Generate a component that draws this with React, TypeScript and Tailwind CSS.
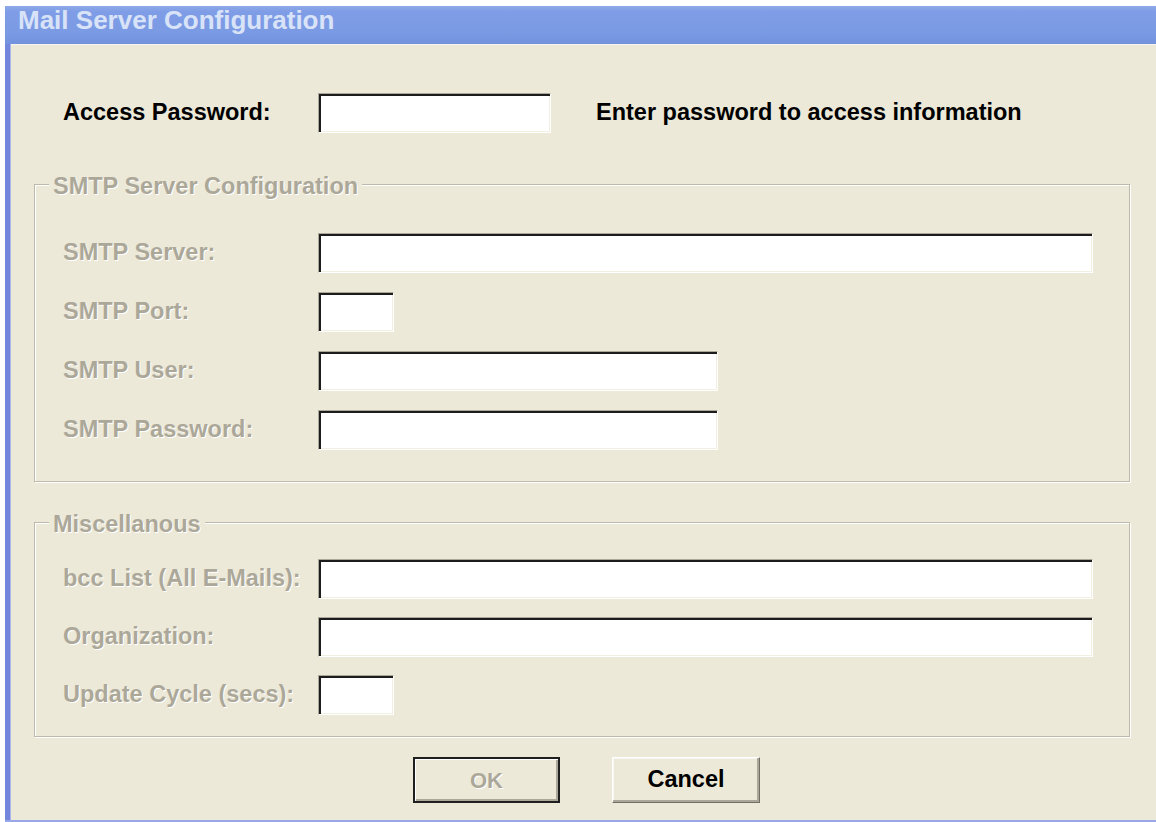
import React from "react";

const font = "font-['Liberation_Sans',Arial,sans-serif]";

function Field({ w, type = "text" }: { w: string; type?: string }) {
  return (
    <input
      type={type}
      className={`${w} h-[40px] bg-white outline-none border border-t-[#aca899] border-l-[#aca899] border-r-white border-b-white shadow-[inset_2px_2px_0_#1c1c1c,inset_-1px_-1px_0_#f1efe2]`}
    />
  );
}

function Row({ label, w, type }: { label: string; w: string; type?: string }) {
  return (
    <div className="flex items-center h-[40px]">
      <span className="w-[255px] text-[23.5px] font-bold text-[#aca899] [text-shadow:1px_1px_0_#ffffff] whitespace-nowrap">
        {label}
      </span>
      <Field w={w} type={type} />
    </div>
  );
}

function Group({
  title,
  className,
  children,
}: {
  title: string;
  className: string;
  children: React.ReactNode;
}) {
  return (
    <div
      className={`relative ml-[23px] w-[1096px] border border-[#bdbaab] shadow-[inset_1px_1px_0_#ffffff,1px_1px_0_#ffffff] ${className}`}
    >
      <span className="absolute -top-[12px] left-[14px] px-[4px] bg-[#ece9d8] leading-[26px] text-[23.5px] font-bold text-[#aca899] [text-shadow:1px_1px_0_#ffffff] whitespace-nowrap">
        {title}
      </span>
      {children}
    </div>
  );
}

export default function App() {
  return (
    <div className={`w-[1156px] h-[822px] bg-white overflow-hidden ${font}`}>
      <div className="ml-[5px] mt-[6px] h-[816px] flex flex-col">
        {/* caption */}
        <div className="h-[38px] shrink-0 bg-[linear-gradient(to_bottom,#8ea9ea_0%,#7f9de6_15%,#7b9ae4_70%,#7392de_100%)] pl-[13px] pt-[2px]">
          <span className="text-[26px] leading-[25px] font-bold text-[#d9e3f8] whitespace-nowrap">
            Mail Server Configuration
          </span>
        </div>

        <div className="flex flex-1">
          {/* left frame edge */}
          <div className="w-[6px] bg-[#7286dc] border-r border-[#a9b6ec]" />

          <div className="flex-1 bg-[#ece9d8] border-t border-[#f6f4ec] flex flex-col">
            {/* password row */}
            <div className="mt-[48px] ml-[52px] flex items-center h-[40px]">
              <span className="w-[255px] text-[23.5px] font-bold text-black whitespace-nowrap">
                Access Password:
              </span>
              <Field w="w-[233px]" type="password" />
              <span className="ml-[45px] text-[23.5px] font-bold text-black whitespace-nowrap">
                Enter password to access information
              </span>
            </div>

            <Group title="SMTP Server Configuration" className="mt-[51px] h-[298px] pt-[48px] pl-[28px]">
              <div className="flex flex-col gap-[19px]">
                <Row label="SMTP Server:" w="w-[775px]" />
                <Row label="SMTP Port:" w="w-[76px]" />
                <Row label="SMTP User:" w="w-[400px]" />
                <Row label="SMTP Password:" w="w-[400px]" type="password" />
              </div>
            </Group>

            <Group title="Miscellanous" className="mt-[40px] h-[215px] pt-[36px] pl-[28px]">
              <div className="flex flex-col gap-[18px]">
                <Row label="bcc List (All E-Mails):" w="w-[775px]" />
                <Row label="Organization:" w="w-[775px]" />
                <Row label="Update Cycle (secs):" w="w-[76px]" />
              </div>
            </Group>

            {/* buttons */}
            <div className="mt-[20px] ml-[402px] flex gap-[52px]">
              <button
                disabled
                className="w-[147px] h-[46px] bg-[#ece9d8] border-2 border-[#1f1f1f] shadow-[inset_1px_1px_0_#ffffff,inset_-2px_-2px_0_#aca899] text-[22px] font-bold text-[#aca899] [text-shadow:1px_1px_0_#ffffff]"
              >
                OK
              </button>
              <button className="w-[148px] h-[46px] bg-[#ece9d8] border border-t-white border-l-white border-r-[#716f64] border-b-[#716f64] shadow-[inset_-2px_-2px_0_#aca899,inset_1px_1px_0_#f7f6f0] text-[23.5px] font-bold text-black">
                Cancel
              </button>
            </div>
          </div>
        </div>

        {/* bottom frame edge */}
        <div className="h-[2px] bg-[#97a7e8]" />
      </div>
    </div>
  );
}
